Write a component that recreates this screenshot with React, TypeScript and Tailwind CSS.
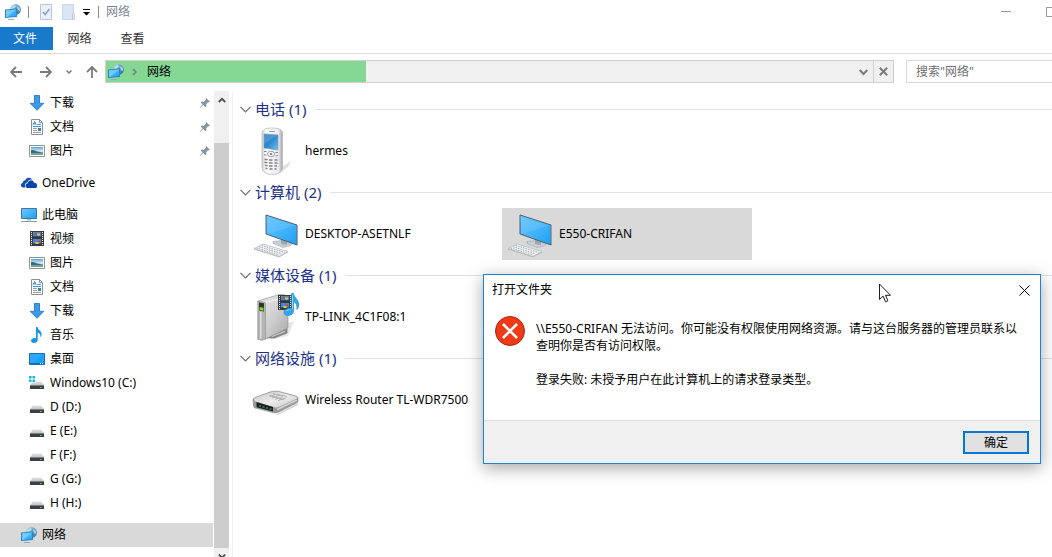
import { ReactNode, useState } from "react";

type NavItem = {
  id: string;
  label: string;
  icon: ReactNode;
  nested?: boolean;
  pinned?: boolean;
};

type Device = { name: string; icon: ReactNode };

function Gradients() {
  return (
    <svg className="absolute h-0 w-0" aria-hidden="true">
      <defs>
        <linearGradient id="screen" x1="0" y1="0" x2="1" y2="1">
          <stop offset="0" stopColor="#6cc8ff" />
          <stop offset="0.5" stopColor="#45b4fb" />
          <stop offset="1" stopColor="#1fa0f5" />
        </linearGradient>
        <linearGradient id="globe" x1="0" y1="0" x2="1" y2="1">
          <stop offset="0" stopColor="#a9d3e6" />
          <stop offset="0.5" stopColor="#5f9fc0" />
          <stop offset="1" stopColor="#2b6a97" />
        </linearGradient>
        <linearGradient id="photo" x1="0" y1="0" x2="0" y2="1">
          <stop offset="0" stopColor="#5d9fe0" />
          <stop offset="0.5" stopColor="#d3eaf5" />
          <stop offset="1" stopColor="#8fb7c4" />
        </linearGradient>
        <linearGradient id="metal" x1="0" y1="0" x2="1" y2="1">
          <stop offset="0" stopColor="#ececec" />
          <stop offset="0.55" stopColor="#cdcdcd" />
          <stop offset="1" stopColor="#a4a4a4" />
        </linearGradient>
        <linearGradient id="routerTop" x1="0" y1="0" x2="1" y2="1">
          <stop offset="0" stopColor="#c4c4c4" />
          <stop offset="0.5" stopColor="#ececec" />
          <stop offset="1" stopColor="#c9c9c9" />
        </linearGradient>
        <linearGradient id="shell" x1="0" y1="0" x2="1" y2="0">
          <stop offset="0" stopColor="#d0d0d4" />
          <stop offset="0.2" stopColor="#fbfbfc" />
          <stop offset="0.8" stopColor="#ececef" />
          <stop offset="1" stopColor="#a3a3a8" />
        </linearGradient>
        <linearGradient id="phoneScreen" x1="0" y1="0" x2="1" y2="1">
          <stop offset="0" stopColor="#2a7cc2" />
          <stop offset="0.5" stopColor="#2f8ad0" />
          <stop offset="1" stopColor="#74c1f0" />
        </linearGradient>
        <linearGradient id="drive" x1="0" y1="0" x2="0" y2="1">
          <stop offset="0" stopColor="#e3e5e8" />
          <stop offset="1" stopColor="#bfc3c8" />
        </linearGradient>
      </defs>
    </svg>
  );
}

function NetworkIcon() {
  return (
    <svg className="size-4 shrink-0" viewBox="0 0 16 16">
      <circle cx="10.500" cy="5.500" r="5.400" fill="url(#globe)" />
      <path d="M6.500 2.500 9.500.800l1.500 1.700-2 2-3 .5zM12 2l3 2v3l-2-1z" fill="#c4e2ee" opacity=".8" />
      <path d="M0 5.500 12 4.500V13L0 14z" fill="#2f86bd" />
      <path d="M1 6.400 11 5.500v6.600L1 13z" fill="url(#screen)" />
      <path d="M1 6.400 11 5.500 2 12.900l-1 .1z" fill="#8ed6ff" opacity=".6" />
      <path d="M3 15h6v1H3z" fill="#8eaec4" />
    </svg>
  );
}

function DownloadIcon() {
  return (
    <svg className="size-4 shrink-0" viewBox="0 0 16 16">
      <path d="M5.500.500h5v7.800h4.300L8 15.300 1.200 8.300h4.300z" fill="#3f9ae6" stroke="#2f83cc" />
    </svg>
  );
}

function DocumentIcon() {
  return (
    <svg className="size-4 shrink-0" viewBox="0 0 16 16">
      <path d="M2.500.500h8l3 3v12h-11z" fill="#fff" stroke="#8b8f94" />
      <path d="M10.500.500v3h3" fill="none" stroke="#8b8f94" />
      <path d="m4 5.800 1.700-3.300L7.200 5.800M4.600 4.800h2" fill="none" stroke="#2b8fd6" />
      <path d="M8 5.500h4M4 7.500h8" stroke="#3d9bdb" />
      <path d="M4 9.500h4M4 11.500h4M4 13.500h8" stroke="#9aa5ad" />
      <path d="M9 9h3v3H9z" fill="#487f9e" />
    </svg>
  );
}

function PictureIcon() {
  return (
    <svg className="size-4 shrink-0" viewBox="0 0 16 16">
      <path d="M.500 2.500h15v11H.500z" fill="#fff" stroke="#909396" />
      <path d="M2 4h12v8H2z" fill="url(#photo)" />
      <path d="M2 7c3-.6 5 1.600 12 2.400v1.200H2z" fill="#3f6f62" />
      <path d="M2 10.400h12V12H2z" fill="#6f9fae" />
    </svg>
  );
}

function OneDriveIcon() {
  return (
    <svg className="size-4 shrink-0" viewBox="0 0 16 16">
      <path
        d="M4.400 12.500H2A2.300 2.300 0 0 1 1.600 8 3 3 0 0 1 4.200 5.300C5 2.500 9.300 1.600 11.200 4.600 8.600 4 6.800 5.500 6.600 7.400 4 7.600 3.200 10.600 4.400 12.500z"
        fill="#0f4fb0"
      />
      <path
        d="M6 13a2.500 2.500 0 0 1 .9-4.800C7.200 4.800 12 4.200 13 7.800c2.400-.1 3.400 1.600 3 3.600-.2.9-.9 1.600-1.900 1.600z"
        fill="#0a46a8"
      />
    </svg>
  );
}

function ThisPcIcon() {
  return (
    <svg className="size-4 shrink-0" viewBox="0 0 16 16">
      <path d="M.500 1.500h15v10H.500z" fill="url(#screen)" stroke="#41779c" />
      <path d="M6 12h4v1.500H6z" fill="#a9bdca" />
      <path d="M0 14.500h16" stroke="#7f9db2" />
    </svg>
  );
}

function FilmStrip() {
  return (
    <g>
      <path d="M1 0h14v15H1z" fill="#3b3b3b" />
      <path d="M2.500 1v14M13.500 1v14" stroke="#f2f2f2" strokeDasharray="1 1" />
      <path d="M4 1h8v6H4zM4 8h8v6H4z" fill="#4a86d8" />
      <path d="M4 5.200h8V7H4zM4 12.500h8V14H4z" fill="#26384f" />
      <path d="M6 2h2v2H6zM9 9.500h2v2H9z" fill="#d7442f" />
      <path d="M8 2.500h3v2H8zM6.500 11h3v2h-3z" fill="#f0c92e" />
    </g>
  );
}

function VideoIcon() {
  return (
    <svg className="size-4 shrink-0" viewBox="0 0 16 16">
      <FilmStrip />
    </svg>
  );
}

function MusicIcon() {
  return (
    <svg className="size-4 shrink-0" viewBox="0 0 16 16">
      <path
        d="M7 0h1.500c.2 2.700 4.200 4 4.200 7.300 0 1.400-.6 2.400-1.400 3.200.6-2.500-.6-4.200-2.600-5V13c0 1.800-1.800 3-3.800 3C3.100 16 2 15 2 13.800 2 12 4.300 10.700 7 11.200z"
        fill="#1296ee"
      />
    </svg>
  );
}

function DesktopIcon() {
  return (
    <svg className="size-4 shrink-0" viewBox="0 0 16 16">
      <path d="M.500 2.500h15v11H.500z" fill="#1aa1fb" stroke="#1470b0" />
      <path d="M1 3h12L5 12H1z" fill="#48b6ff" opacity=".4" />
      <path d="M1 12.500h14" stroke="#0d6fb5" />
      <path d="M11 12.500h1M13 12.500h1" stroke="#fff" />
    </svg>
  );
}

function DriveIcon({ system = false }: { system?: boolean }) {
  return (
    <svg className="size-4 shrink-0" viewBox="0 0 16 16">
      <path d="M4 6.500h8l3 3.500H1z" fill="url(#drive)" />
      <path d="M1 10h14v4H1z" fill="#3c3e40" />
      <path d="M1 10h14v1H1z" fill="#7c8085" />
      <path d="M11 12h1.500v1H11z" fill="#4be34b" />
      {system && (
        <>
          <path d="M0 1h6v6.500H0z" fill="#fff" />
          <path
            d="M0 1h2.600v2.500H0zM3.500 1H6v2.500H3.500zM0 4.500h2.600V7H0zM3.500 4.500H6V7H3.500z"
            fill="#19b5ee"
          />
        </>
      )}
    </svg>
  );
}

function PinIcon() {
  return (
    <svg className="size-3 shrink-0" viewBox="0 0 12 12">
      <path
        d="M7.200 1 11 4.800l-1.200.6-.6-.2-1.900 1.900.2 2.200-1 .9L4.300 8 1 11.200.6 11l3-3.600L1.700 5.400l.9-.9 2.300.2L6.900 2.800l-.3-.7z"
        fill="#8795a1"
      />
    </svg>
  );
}

function PhoneDevice() {
  return (
    <svg className="size-12 shrink-0" viewBox="0 0 48 48">
      <path d="m28 40 9-6-3 6-8 6z" fill="#bbb" opacity=".45" />
      <path
        d="M8 6c0-3.500 4-5 10-5s10.500 1.500 10.500 5v34c0 5-4 7.500-10 7.500S8 45 8 40z"
        fill="url(#shell)"
        stroke="#b4b4b8"
        strokeWidth=".7"
      />
      <path d="M15 4.500h6" stroke="#a7a7ab" />
      <path d="M10 7 24 8v15l-14-2z" fill="url(#phoneScreen)" stroke="#7b93a8" strokeWidth=".6" />
      <path d="m10 7 14 1-14 9z" fill="#75b5e4" opacity=".4" />
      <ellipse cx="17" cy="27" rx="3.500" ry="2.800" fill="#f2f2f4" stroke="#8c8c91" strokeWidth=".8" />
      <circle cx="17" cy="27" r="1" fill="#68686e" />
      <path d="M10 24.500h2.500M21.500 25.500H24M10 28h2.500M21.500 28.800H24" stroke="#85858a" />
      <path
        d="M10.500 32.500h3M15 33h3.500M20.500 33h3M10.500 35.500h3M15 36h3.500M20.500 36h3M11 38.500h2.500M15 39h3.500M20.500 39H23M11.500 41.500h2M15.500 42h3M20.500 42h2"
        stroke="#818187"
        strokeWidth="1.300"
      />
    </svg>
  );
}

function ComputerDevice() {
  return (
    <svg className="size-12 shrink-0" viewBox="0 0 48 48">
      <path d="m19 31.500 9-1 10 3-1 2-8 2-10-4z" fill="#c9d0d5" stroke="#a1abb1" strokeWidth=".6" />
      <path d="m27 28 6 2v5l-6-1z" fill="#9ba7af" />
      <path d="m12 5 31 10v20L12 24z" fill="url(#screen)" stroke="#4c5f6c" />
      <path d="m12.500 6 29.500 9.500-28 8z" fill="#75cbff" opacity=".35" />
      <path d="M43.300 15.500V34" stroke="#98a5ad" />
      <path d="m0 38.500 9-4.500 25 7.500-9 5z" fill="#eef0f1" stroke="#b3babf" strokeWidth=".7" />
      <path
        d="m2.500 38 22.500 7M5 36.700l22.500 7M7.500 35.400l23 7"
        stroke="#a3abb0"
        strokeWidth=".9"
        strokeDasharray="1.600 1"
      />
      <path d="m0 39 25 8 9-5" fill="none" stroke="#b0b7bc" strokeWidth=".8" />
    </svg>
  );
}

function MediaDevice() {
  return (
    <svg className="size-12 shrink-0 overflow-visible" viewBox="0 0 48 48">
      <path d="m34 30 6-2-6 15-18 4z" fill="#999" opacity=".25" />
      <path d="m16 43 17-7.500v4.500l-13 5h-8z" fill="#8a8a8a" stroke="#666" strokeWidth=".6" />
      <path d="m18 43.500 13-5" stroke="#d8d8d8" />
      <path d="m4 8 21-6.500c3-.6 7 0 9 2.500v31L11.500 46 4 46.500z" fill="url(#metal)" stroke="#9a9a9a" strokeWidth=".7" />
      <path d="m4 8 7.500 1.500V46c-2 1.500-6 1.500-7.500 0z" fill="#b5b5b5" stroke="#8c8c8c" strokeWidth=".6" />
      <path d="M6 19h1.500v27H6z" fill="#dcdcdc" />
      <path d="m5 9.500 5 .8v8.200l-5-1z" fill="#333" />
      <path d="m5.500 14 4 .8v3l-4-.8z" fill="#72dc22" />
      <path d="M11.500 9.500 33 3.500" stroke="#f7f7f7" />
      <g transform="translate(23 2)">
        <FilmStrip />
      </g>
      <path
        d="M37.500.500h2c.5 4 5.300 6 5.300 11 0 2-.8 4-2 5 .7-4-.5-6.500-3.300-8V18c0 2.800-2.500 4.500-5.500 4.500-2.600 0-4-1.500-4-3.200 0-2.800 3.500-4.600 7.500-4z"
        fill="#2fa7ec"
        stroke="#1b80c1"
        strokeWidth=".6"
      />
      <path d="M38.500 2v14M32 18c1-1 2.500-1.500 4-1.500" fill="none" stroke="#8dd4fb" />
    </svg>
  );
}

function RouterDevice() {
  return (
    <svg className="size-12 shrink-0 overflow-visible" viewBox="0 0 48 48">
      <path d="m4 33 18 5.500L44 27v2L24 39z" fill="#999" opacity=".4" />
      <path
        d="M-1 23.500c0-1 1-1.500 2-2L16 16c3-1 6-1 9-.6L42 20c1.500.5 2.300 1.500 2 2.500v2.500c0 1-.6 1.600-1.500 2L25 36c-2 1-4 1.200-6 .6L1 32c-1-.3-1.300-1-1.400-2z"
        fill="#999"
        stroke="#8b8b8b"
        strokeWidth=".6"
      />
      <path
        d="M0 23c0-.8 1-1.200 2-1.600L16 16.500c3-1 6-1 9-.6l16.500 4.500c2 .6 2.300 1.600.5 2.500L26 30.500c-2 1-4 1.200-6 .7L1.500 25.500C.5 25 0 24 0 23z"
        fill="url(#routerTop)"
      />
      <path
        d="m16 20.500 5-2M18 22l8-3M21 23.500l8-3M24 24.500l8-2.500M19 17.500l14 3M15 19.500l15 4"
        stroke="#a3a3a3"
        strokeWidth=".8"
      />
      <path d="m2.500 26 16.500 5v4.500L3.500 31.500c-.8-.3-1-.8-1-1.500z" fill="#1d2022" />
      <path d="M5 30h2M8.500 31h2M12 32h2M15.500 33h2" stroke="#3bb872" strokeWidth="1.200" />
      <path d="M23 33.500 43 24" stroke="#d4d4d4" strokeWidth="1.500" />
    </svg>
  );
}

const navGroups: NavItem[][] = [
  [
    { id: "quick-downloads", label: "下载", icon: <DownloadIcon />, nested: true, pinned: true },
    { id: "quick-documents", label: "文档", icon: <DocumentIcon />, nested: true, pinned: true },
    { id: "quick-pictures", label: "图片", icon: <PictureIcon />, nested: true, pinned: true },
  ],
  [{ id: "onedrive", label: "OneDrive", icon: <OneDriveIcon /> }],
  [
    { id: "this-pc", label: "此电脑", icon: <ThisPcIcon /> },
    { id: "videos", label: "视频", icon: <VideoIcon />, nested: true },
    { id: "pictures", label: "图片", icon: <PictureIcon />, nested: true },
    { id: "documents", label: "文档", icon: <DocumentIcon />, nested: true },
    { id: "downloads", label: "下载", icon: <DownloadIcon />, nested: true },
    { id: "music", label: "音乐", icon: <MusicIcon />, nested: true },
    { id: "desktop", label: "桌面", icon: <DesktopIcon />, nested: true },
    { id: "c", label: "Windows10 (C:)", icon: <DriveIcon system />, nested: true },
    { id: "d", label: "D (D:)", icon: <DriveIcon />, nested: true },
    { id: "e", label: "E (E:)", icon: <DriveIcon />, nested: true },
    { id: "f", label: "F (F:)", icon: <DriveIcon />, nested: true },
    { id: "g", label: "G (G:)", icon: <DriveIcon />, nested: true },
    { id: "h", label: "H (H:)", icon: <DriveIcon />, nested: true },
  ],
  [{ id: "network", label: "网络", icon: <NetworkIcon /> }],
];

const deviceGroups: { title: string; devices: Device[] }[] = [
  { title: "电话", devices: [{ name: "hermes", icon: <PhoneDevice /> }] },
  {
    title: "计算机",
    devices: [
      { name: "DESKTOP-ASETNLF", icon: <ComputerDevice /> },
      { name: "E550-CRIFAN", icon: <ComputerDevice /> },
    ],
  },
  { title: "媒体设备", devices: [{ name: "TP-LINK_4C1F08:1", icon: <MediaDevice /> }] },
  { title: "网络设施", devices: [{ name: "Wireless Router TL-WDR7500", icon: <RouterDevice /> }] },
];

function TitleBar() {
  return (
    <header className="flex h-6 items-center overflow-hidden pl-[5px]">
      <NetworkIcon />
      <span className="ml-[7px] h-3 w-px bg-[#8a8a8a]" />
      <button aria-label="属性" className="ml-[11px]">
        <svg className="h-4 w-3" viewBox="0 0 12 16">
          <path d="M.500.500h11v15H.500z" fill="#eaf0f9" stroke="#b9c6dd" />
          <path d="m3 8 2.200 2.500L9.500 5" fill="none" stroke="#8a9fc9" strokeWidth="1.500" />
        </svg>
      </button>
      <button aria-label="新建文件夹" className="ml-[10px]">
        <svg className="h-4 w-[13px]" viewBox="0 0 13 16">
          <path d="M.500.500h11v9h1v6H.500z" fill="#dbe5f4" stroke="#c8d5ea" />
          <path d="M10.500 9.500v6" stroke="#b9c9e2" />
        </svg>
      </button>
      <button aria-label="自定义快速访问工具栏" className="ml-2">
        <svg className="h-2 w-[7px]" viewBox="0 0 7 8">
          <path d="M0 1.500h7" stroke="#000" />
          <path d="M0 4h7L3.500 7.500z" fill="#000" />
        </svg>
      </button>
      <span className="ml-2 h-3 w-px bg-[#8a8a8a]" />
      <h1 className="ml-[7px] flex-1 text-[#7b8794]">网络</h1>
      <button aria-label="最小化" className="mr-[35px] shrink-0">
        <svg className="h-[10px] w-[10px]" viewBox="0 0 10 10">
          <path d="M0 4.500h10" stroke="#999" />
        </svg>
      </button>
      <button aria-label="最大化" className="-mr-1 shrink-0">
        <svg className="h-[10px] w-[10px]" viewBox="0 0 10 10">
          <path d="M.500.500h9v9h-9z" fill="none" stroke="#999" />
        </svg>
      </button>
    </header>
  );
}

function AddressRow() {
  return (
    <div className="flex h-[35px] items-center pl-[10px] text-[#7a7a7a]">
      <button aria-label="后退">
        <svg className="size-3" viewBox="0 0 12 12">
          <path d="M12 6H1M6 1 1 6l5 5" fill="none" stroke="currentColor" strokeWidth="1.800" />
        </svg>
      </button>
      <button aria-label="前进" className="ml-[18px]">
        <svg className="size-3" viewBox="0 0 12 12">
          <path d="M0 6h11M6 1l5 5-5 5" fill="none" stroke="currentColor" strokeWidth="1.800" />
        </svg>
      </button>
      <button aria-label="最近浏览的位置" className="ml-[14px]">
        <svg className="size-[6px]" viewBox="0 0 6 6">
          <path d="m.5 1.500 2.500 2.500 2.500-2.500" fill="none" stroke="currentColor" strokeWidth="1.500" />
        </svg>
      </button>
      <button aria-label="上移" className="ml-[14px]">
        <svg className="size-3" viewBox="0 0 12 12">
          <path d="M6 12V1M1 6l5-5 5 5" fill="none" stroke="currentColor" strokeWidth="1.800" />
        </svg>
      </button>
      <div className="ml-[7px] flex h-[23px] flex-1 items-center border border-[#d0d0d0] bg-[linear-gradient(to_right,#84d893_33%,#f0f0f0_33%)] pl-[2px]">
        <NetworkIcon />
        <svg className="ml-[8px] h-2 w-[5px]" viewBox="0 0 5 8">
          <path d="m1 1 3 3-3 3" fill="none" stroke="currentColor" strokeWidth="1.500" />
        </svg>
        <a href="#network" className="ml-[10px] flex-1 text-black">
          网络
        </a>
        <button aria-label="展开地址" className="px-[5px]">
          <svg className="h-2 w-[9px]" viewBox="0 0 9 8">
            <path d="m.7 2 3.800 4 3.800-4" fill="none" stroke="currentColor" strokeWidth="2" />
          </svg>
        </button>
        <button
          aria-label="停止加载"
          className="flex h-full w-5 items-center justify-center border-l border-[#d0d0d0]"
        >
          <svg className="size-[9px]" viewBox="0 0 9 9">
            <path d="m.8.8 7.400 7.400M8.200.8.8 8.200" stroke="currentColor" strokeWidth="2" />
          </svg>
        </button>
      </div>
      <input
        aria-label="搜索网络"
        placeholder={'搜索"网络"'}
        className="ml-3 h-[23px] w-[146px] border border-r-0 border-[#d9d9d9] px-[9px] placeholder:text-[#6f6f6f] focus:outline-none"
      />
    </div>
  );
}

function Sidebar() {
  const [active, setActive] = useState("network");

  return (
    <nav className="flex w-[213px] shrink-0 flex-col gap-2 overflow-hidden">
      {navGroups.map((group) => (
        <ul key={group[0].id}>
          {group.map((item) => (
            <li key={item.id}>
              <a
                href={`#${item.id}`}
                onClick={() => setActive(item.id)}
                className={`flex h-6 items-center gap-[5px] pr-[2px] ${
                  item.nested ? "pl-[29px]" : "pl-[21px]"
                } ${item.id === active ? "bg-[#d9d9d9]" : ""}`}
              >
                {item.icon}
                <span className="flex-1">{item.label}</span>
                {item.pinned && <PinIcon />}
              </a>
            </li>
          ))}
        </ul>
      ))}
    </nav>
  );
}

function ScrollBar() {
  return (
    <div className="ml-px flex w-[15px] shrink-0 flex-col bg-[#f0f0f0]">
      <button aria-label="向上滚动" className="flex h-[17px] shrink-0 items-center justify-center">
        <svg className="h-[6px] w-2" viewBox="0 0 8 6">
          <path d="m.8 5 3.200-3.200L7.200 5" fill="none" stroke="#505050" strokeWidth="1.800" />
        </svg>
      </button>
      <div className="mt-[35px] flex-1 bg-[#cdcdcd]" />
      <button aria-label="向下滚动" className="flex h-[9px] shrink-0 items-end justify-center overflow-hidden">
        <svg className="h-[3px] w-2" viewBox="0 0 8 3">
          <path d="m.8.500 3.200 3.200L7.200.500" fill="none" stroke="#505050" strokeWidth="1.800" />
        </svg>
      </button>
    </div>
  );
}

function DeviceList() {
  const [selected, setSelected] = useState("E550-CRIFAN");

  return (
    <main className="ml-[3px] min-w-0 flex-1 border-l border-[#f0f0f0] pt-[3px]">
      {deviceGroups.map((group) => (
        <section key={group.title}>
          <h2 className="flex h-[31px] items-center pl-[7px] text-[15px] text-[#1e3287]">
            <button className="flex items-center gap-1">
              <svg className="h-[7px] w-[11px]" viewBox="0 0 11 7">
                <path d="m.5.800 5 5 5-5" fill="none" stroke="#6d6d6d" strokeWidth="1.200" />
              </svg>
              <span className="pb-[2px]">
                {group.title} ({group.devices.length})
              </span>
            </button>
            <span className="ml-2 h-px flex-1 bg-[#e2e2e2]" />
          </h2>
          <div className="flex flex-wrap gap-1 pl-[15px]">
            {group.devices.map((device) => (
              <button
                key={device.name}
                onClick={() => setSelected(device.name)}
                className={`flex h-[52px] w-[250px] items-center gap-[3px] pl-[6px] text-left whitespace-nowrap ${
                  device.name === selected ? "bg-[#d9d9d9]" : ""
                }`}
              >
                {device.icon}
                {device.name}
              </button>
            ))}
          </div>
        </section>
      ))}
    </main>
  );
}

function ErrorDialog({ onClose }: { onClose: () => void }) {
  return (
    <div
      role="alertdialog"
      aria-labelledby="dialog-title"
      aria-describedby="dialog-text"
      className="absolute top-[274px] right-[11px] w-[558px] border border-[#1883d7] bg-white shadow-[0_4px_16px_rgba(0,0,0,0.35)]"
    >
      <div className="flex h-[30px] items-center justify-between pr-[10px] pl-2">
        <h2 id="dialog-title">打开文件夹</h2>
        <button aria-label="关闭" onClick={onClose}>
          <svg className="size-[11px]" viewBox="0 0 11 11">
            <path d="m.5.500 10 10M10.500.500l-10 10" stroke="#000" />
          </svg>
        </button>
      </div>
      <div className="flex gap-[11px] pt-[11px] pr-3 pb-8 pl-[11px]">
        <svg className="size-[30px] shrink-0" viewBox="0 0 30 30">
          <circle cx="15" cy="15" r="14.500" fill="#f03a17" stroke="#a62a14" />
          <path d="m8 8 14 14M22 8 8 22" stroke="#fff" strokeWidth="2.600" />
        </svg>
        <div id="dialog-text" className="pt-1 leading-[17px]">
          <p>
            \\E550-CRIFAN 无法访问。你可能没有权限使用网络资源。请与这台服务器的管理员联系以查明你是否有访问权限。
          </p>
          <p className="mt-[17px]">登录失败: 未授予用户在此计算机上的请求登录类型。</p>
        </div>
      </div>
      <div className="flex h-[43px] items-center justify-end border-t border-[#dfdfdf] bg-[#f0f0f0] pr-[11px]">
        <button
          onClick={onClose}
          className="h-[23px] w-[66px] border-2 border-[#0078d7] bg-[#e1e1e1] leading-[19px]"
        >
          确定
        </button>
      </div>
    </div>
  );
}

export default function App() {
  const [dialogOpen, setDialogOpen] = useState(true);

  return (
    <div className="relative flex h-screen flex-col overflow-hidden bg-white font-['Noto_Sans','Noto_Sans_CJK_SC',sans-serif] text-[12px] leading-4 text-black">
      <Gradients />
      <TitleBar />
      <div className="flex h-[30px] items-center border-b border-[#dadbdc] text-[#333]">
        <button className="h-[23px] w-[53px] bg-[#1979ca] pr-[3px] text-white">文件</button>
        <button className="h-[23px] w-[53px]">网络</button>
        <button className="h-[23px] w-[53px]">查看</button>
      </div>
      <AddressRow />
      <div className="flex min-h-0 flex-1 pt-[2px]">
        <Sidebar />
        <ScrollBar />
        <DeviceList />
      </div>
      {dialogOpen && <ErrorDialog onClose={() => setDialogOpen(false)} />}
      <svg className="pointer-events-none absolute top-[283px] left-[879px] h-5 w-3" viewBox="0 0 12 20">
        <path
          d="M.500 1v15.500l3.600-3.400 2.400 5.700 2.400-1-2.400-5.500h5z"
          fill="#fff"
          stroke="#1d1d2b"
        />
      </svg>
    </div>
  );
}
